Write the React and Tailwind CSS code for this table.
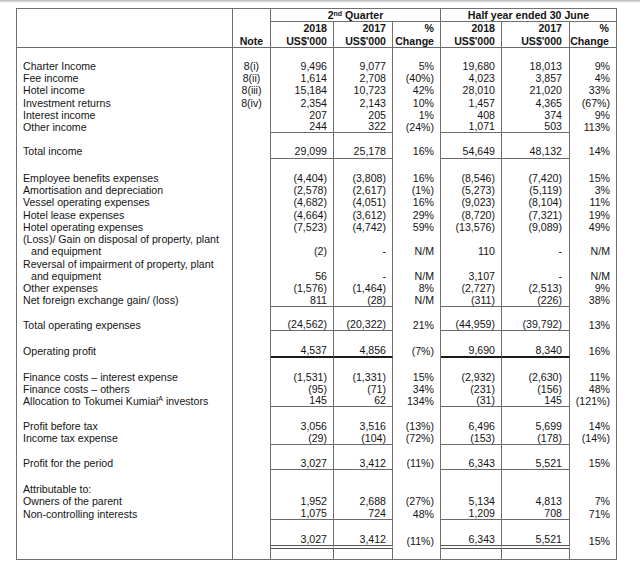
const LINE = 'border-r border-r-[#707070]';

const UNDERLINE = {
  single: 'border-b border-b-[#6a6a6a]',
  thick: 'border-b-2 border-b-[#1a1a1a]',
  double: 'border-b-4 [border-bottom-style:double] border-b-[#555555]',
};

// columnas numéricas: 2018 / 2017 / % para el trimestre y el semestre
const COLS = [
  { w: 'w-[63px]', pr: 'pr-[6px]', line: true },
  { w: 'w-[59px]', pr: 'pr-[6px]', line: true },
  { w: 'w-[48px]', pr: 'pr-[6px]', line: false },
  { w: 'w-[61px]', pr: 'pr-[6px]', line: true },
  { w: 'w-[68px]', pr: 'pr-[7px]', line: true },
  { w: 'w-[47px]', pr: 'pr-[6px]', line: false },
];

const ROWS = [
  { h: 'h-[12px]' },
  { h: 'h-[12.2px]', label: 'Charter Income', note: '8(i)', v: ['9,496', '9,077', '5%', '19,680', '18,013', '9%'] },
  { h: 'h-[12.2px]', label: 'Fee income', note: '8(ii)', v: ['1,614', '2,708', '(40%)', '4,023', '3,857', '4%'] },
  { h: 'h-[12.2px]', label: 'Hotel income', note: '8(iii)', v: ['15,184', '10,723', '42%', '28,010', '21,020', '33%'] },
  { h: 'h-[12.2px]', label: 'Investment returns', note: '8(iv)', v: ['2,354', '2,143', '10%', '1,457', '4,365', '(67%)'] },
  { h: 'h-[12.2px]', label: 'Interest income', v: ['207', '205', '1%', '408', '374', '9%'] },
  { h: 'h-[12.2px]', label: 'Other income', v: ['244', '322', '(24%)', '1,071', '503', '113%'], ul: 'single' },
  { h: 'h-[10.8px]' },
  { h: 'h-[15px]', label: 'Total income', v: ['29,099', '25,178', '16%', '54,649', '48,132', '14%'], ul: 'single' },
  { h: 'h-[13px]' },
  { h: 'h-[12.25px]', label: 'Employee benefits expenses', v: ['(4,404)', '(3,808)', '16%', '(8,546)', '(7,420)', '15%'] },
  { h: 'h-[12.25px]', label: 'Amortisation and depreciation', v: ['(2,578)', '(2,617)', '(1%)', '(5,273)', '(5,119)', '3%'] },
  { h: 'h-[12.25px]', label: 'Vessel operating expenses', v: ['(4,682)', '(4,051)', '16%', '(9,023)', '(8,104)', '11%'] },
  { h: 'h-[12.25px]', label: 'Hotel lease expenses', v: ['(4,664)', '(3,612)', '29%', '(8,720)', '(7,321)', '19%'] },
  { h: 'h-[12.25px]', label: 'Hotel operating expenses', v: ['(7,523)', '(4,742)', '59%', '(13,576)', '(9,089)', '49%'] },
  { h: 'h-[12.25px]', label: '(Loss)/ Gain on disposal of property, plant' },
  { h: 'h-[12.25px]', label: 'and equipment', indent: true, v: ['(2)', '-', 'N/M', '110', '-', 'N/M'] },
  { h: 'h-[12.25px]', label: 'Reversal of impairment of property, plant' },
  { h: 'h-[12.25px]', label: 'and equipment', indent: true, v: ['56', '-', 'N/M', '3,107', '-', 'N/M'] },
  { h: 'h-[12.25px]', label: 'Other expenses', v: ['(1,576)', '(1,464)', '8%', '(2,727)', '(2,513)', '9%'] },
  { h: 'h-[12.25px]', label: 'Net foreign exchange gain/ (loss)', v: ['811', '(28)', 'N/M', '(311)', '(226)', '38%'], ul: 'single' },
  { h: 'h-[12.25px]' },
  { h: 'h-[12px]', label: 'Total operating expenses', v: ['(24,562)', '(20,322)', '21%', '(44,959)', '(39,792)', '13%'], ul: 'single' },
  { h: 'h-[13px]' },
  { h: 'h-[14px]', label: 'Operating profit', v: ['4,537', '4,856', '(7%)', '9,690', '8,340', '16%'], ul: 'thick' },
  { h: 'h-[12.6px]' },
  { h: 'h-[12.2px]', label: 'Finance costs – interest expense', v: ['(1,531)', '(1,331)', '15%', '(2,932)', '(2,630)', '11%'] },
  { h: 'h-[12.2px]', label: 'Finance costs – others', v: ['(95)', '(71)', '34%', '(231)', '(156)', '48%'] },
  {
    h: 'h-[12.2px]',
    label: (
      <>
        Allocation to Tokumei Kumiai<sup className="text-[7px]">A</sup>{' '}investors
      </>
    ),
    v: ['145', '62', '134%', '(31)', '145', '(121%)'],
    ul: 'single',
  },
  { h: 'h-[12.7px]' },
  { h: 'h-[12.2px]', label: 'Profit before tax', v: ['3,056', '3,516', '(13%)', '6,496', '5,699', '14%'] },
  { h: 'h-[13px]', label: 'Income tax expense', v: ['(29)', '(104)', '(72%)', '(153)', '(178)', '(14%)'], ul: 'single' },
  { h: 'h-[11.9px]' },
  { h: 'h-[13px]', label: 'Profit for the period', v: ['3,027', '3,412', '(11%)', '6,343', '5,521', '15%'], ul: 'single' },
  { h: 'h-[12.9px]' },
  { h: 'h-[12.2px]', label: 'Attributable to:' },
  { h: 'h-[12.2px]', label: 'Owners of the parent', v: ['1,952', '2,688', '(27%)', '5,134', '4,813', '7%'] },
  { h: 'h-[13.2px]', label: 'Non-controlling interests', v: ['1,075', '724', '48%', '1,209', '708', '71%'], ul: 'single' },
  { h: 'h-[13.5px]' },
  { h: 'h-[15px]', label: '', v: ['3,027', '3,412', '(11%)', '6,343', '5,521', '15%'], ul: 'double' },
  { h: 'h-[10px]' },
];

function Row({ row }) {
  const ul = row.ul ? UNDERLINE[row.ul] : '';

  return (
    <div className={`flex ${row.h}`}>
      <div
        className={`flex w-[216px] items-center whitespace-pre ${LINE} ${row.indent ? 'pl-[14px]' : 'pl-[6px]'}`}
      >
        <span>{row.label}</span>
      </div>
      <div className={`flex w-[38px] items-center justify-center ${LINE}`}>{row.note}</div>
      {COLS.map((col, i) => (
        <div
          key={i}
          className={`flex items-center justify-end whitespace-nowrap ${col.w} ${col.pr} ${LINE} ${col.line ? ul : ''}`}
        >
          {row.v?.[i]}
        </div>
      ))}
    </div>
  );
}

function Header() {
  const years = ['2018', '2017', '%', '2018', '2017', '%'];
  const units = ["US$'000", "US$'000", 'Change', "US$'000", "US$'000", 'Change'];

  return (
    <div className="font-bold">
      <div className="flex h-[13px]">
        <div className={`w-[216px] ${LINE}`} />
        <div className={`w-[38px] ${LINE}`} />
        <div className={`flex w-[170px] items-center justify-center pt-[1px] border-b border-b-[#707070] ${LINE}`}>
          <span>
            2<sup className="text-[7px]">nd</sup> Quarter
          </span>
        </div>
        <div className={`flex w-[176px] items-center justify-center pt-[1px] border-b border-b-[#707070] ${LINE}`}>
          Half year ended 30 June
        </div>
      </div>
      <div className="flex h-[26px]">
        <div className={`w-[216px] border-b border-b-[#6a6a6a] ${LINE}`} />
        <div
          className={`flex w-[38px] flex-col items-center justify-center border-b border-b-[#6a6a6a] ${LINE}`}
        >
          <span>&nbsp;</span>
          <span>Note</span>
        </div>
        {COLS.map((col, i) => (
          <div
            key={i}
            className={`flex flex-col items-end justify-center whitespace-nowrap border-b border-b-[#6a6a6a] ${col.w} ${
              i === 5 ? 'pr-[7px]' : col.pr
            } ${LINE}`}
          >
            <span>{years[i]}</span>
            <span>{units[i]}</span>
          </div>
        ))}
      </div>
    </div>
  );
}

export default function App() {
  return (
    <div className="h-[565px] w-[640px] overflow-hidden bg-white font-['Liberation_Sans',Arial,sans-serif] text-[10.6px] leading-[12.2px] text-[#141414]">
      <div className="h-[3px] bg-linear-to-b from-[#b5b5b5] to-white" />
      <div className="mt-[5px] ml-[16px] w-[601px] border-t border-b border-l border-[#707070]">
        <Header />
        {ROWS.map((row, i) => (
          <Row key={i} row={row} />
        ))}
      </div>
    </div>
  );
}
